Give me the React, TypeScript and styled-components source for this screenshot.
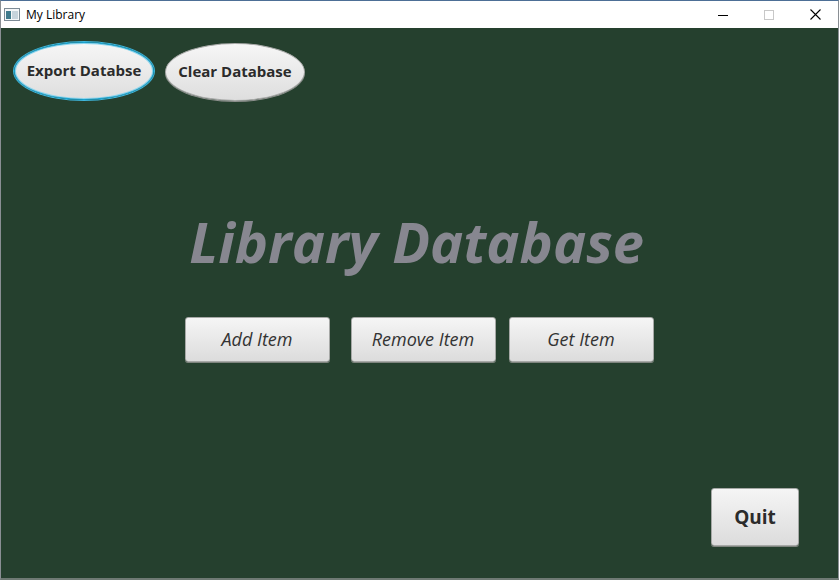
import React from "react";
import styled, { createGlobalStyle } from "styled-components";

const Global = createGlobalStyle`
  html, body { margin: 0; padding: 0; background: #ffffff; }
  body { font-family: "Open Sans", "DejaVu Sans", sans-serif; }
`;

const Window = styled.div`
  width: 839px;
  height: 580px;
  box-sizing: border-box;
  display: flex;
  flex-direction: column;
  border-left: 1px solid #8a8f94;
  border-right: 1px solid #8a8f94;
  border-bottom: 2px solid #6f7a74;
  border-top: 1px solid #4d6f96;
  overflow: hidden;
`;

const TitleBar = styled.div`
  height: 27px;
  flex: none;
  background: #ffffff;
  display: flex;
  align-items: center;
  font-family: "Segoe UI", "Open Sans", sans-serif;
  font-size: 12px;
  color: #000;
`;

const AppIcon = styled.svg`
  width: 16px;
  height: 13px;
  margin-left: 3px;
  margin-right: 6px;
  flex: none;
`;

const TitleText = styled.span`
  flex: 1;
  margin-top: -1px;
`;

const Ctrl = styled.div`
  width: 46px;
  height: 27px;
  display: flex;
  align-items: center;
  justify-content: center;
`;

const Content = styled.div`
  flex: 1;
  background: #25402e;
  display: flex;
  flex-direction: column;
  padding: 14px 39px 32px 13px;
`;

const TopRow = styled.div`
  display: flex;
  gap: 11px;
  align-items: flex-start;
`;

const Oval = styled.button<{ $focused?: boolean }>`
  width: 140px;
  height: 58px;
  border-radius: 50%;
  box-sizing: border-box;
  font-family: "Open Sans", sans-serif;
  font-weight: 700;
  font-size: 15px;
  color: #2b2b2b;
  background: linear-gradient(#f6f6f6, #dedede);
  border: 1px solid ${(p) => (p.$focused ? "#1aa3cf" : "#a9aaa9")};
  box-shadow: ${(p) =>
    p.$focused
      ? "0 0 0 1px #3fb6dc, inset 0 0 0 1px #8fd6ee"
      : "0 1px 0 #8c8f8c"};
  margin-top: ${(p) => (p.$focused ? "0" : "1px")};
  padding: 0 0 3px 0;
  cursor: pointer;
`;

const Heading = styled.h1`
  margin: 102px 0 0 0;
  text-align: center;
  font-family: "Open Sans", sans-serif;
  font-style: italic;
  font-weight: 700;
  font-size: 56px;
  line-height: 76px;
  color: #878790;
  letter-spacing: 0;
  padding-left: 20px;
`;

const ItemRow = styled.div`
  margin-top: 38px;
  display: flex;
  justify-content: center;
  padding-left: 25px;
`;

const ItemButton = styled.button<{ $gap: number }>`
  width: 145px;
  height: 45px;
  margin-left: ${(p) => p.$gap}px;
  box-sizing: border-box;
  border: 1px solid #a6a8a6;
  border-radius: 3px;
  background: linear-gradient(#f5f5f5, #dcdcdc);
  box-shadow: 0 1px 0 #7f857f;
  font-family: "Open Sans", sans-serif;
  font-style: italic;
  font-size: 18px;
  color: #333333;
  padding: 0 0 1px 0;
  cursor: pointer;
`;

const BottomRow = styled.div`
  margin-top: auto;
  display: flex;
  justify-content: flex-end;
`;

const QuitButton = styled.button`
  width: 88px;
  height: 58px;
  box-sizing: border-box;
  border: 1px solid #a6a8a6;
  border-radius: 3px;
  background: linear-gradient(#f5f5f5, #dcdcdc);
  box-shadow: 0 1px 0 #7f857f;
  font-family: "Open Sans", sans-serif;
  font-weight: 700;
  font-size: 19px;
  color: #2b2b2b;
  padding: 0;
  cursor: pointer;
`;

export default function App() {
  return (
    <>
      <Global />
      <Window>
        <TitleBar>
          <AppIcon viewBox="0 0 16 13">
            <rect x="0.5" y="0.5" width="15" height="12" fill="#f4f6f8" stroke="#7d8b96" />
            <rect x="2" y="3" width="5" height="8" fill="#3f7a8c" />
            <rect x="8" y="3" width="6" height="8" fill="#c6d3dc" />
          </AppIcon>
          <TitleText>My Library</TitleText>
          <Ctrl>
            <svg width="10" height="10" viewBox="0 0 10 10">
              <line x1="0" y1="5.5" x2="10" y2="5.5" stroke="#000" strokeWidth="1" />
            </svg>
          </Ctrl>
          <Ctrl>
            <svg width="10" height="10" viewBox="0 0 10 10">
              <rect x="0.5" y="0.5" width="9" height="9" fill="none" stroke="#c8c8c8" />
            </svg>
          </Ctrl>
          <Ctrl>
            <svg width="11" height="11" viewBox="0 0 11 11">
              <path d="M0.5 0.5 L10.5 10.5 M10.5 0.5 L0.5 10.5" stroke="#000" strokeWidth="1.1" />
            </svg>
          </Ctrl>
        </TitleBar>
        <Content>
          <TopRow>
            <Oval $focused>Export Databse</Oval>
            <Oval>Clear Database</Oval>
          </TopRow>
          <Heading>Library Database</Heading>
          <ItemRow>
            <ItemButton $gap={0}>Add Item</ItemButton>
            <ItemButton $gap={21}>Remove Item</ItemButton>
            <ItemButton $gap={13}>Get Item</ItemButton>
          </ItemRow>
          <BottomRow>
            <QuitButton>Quit</QuitButton>
          </BottomRow>
        </Content>
      </Window>
    </>
  );
}
